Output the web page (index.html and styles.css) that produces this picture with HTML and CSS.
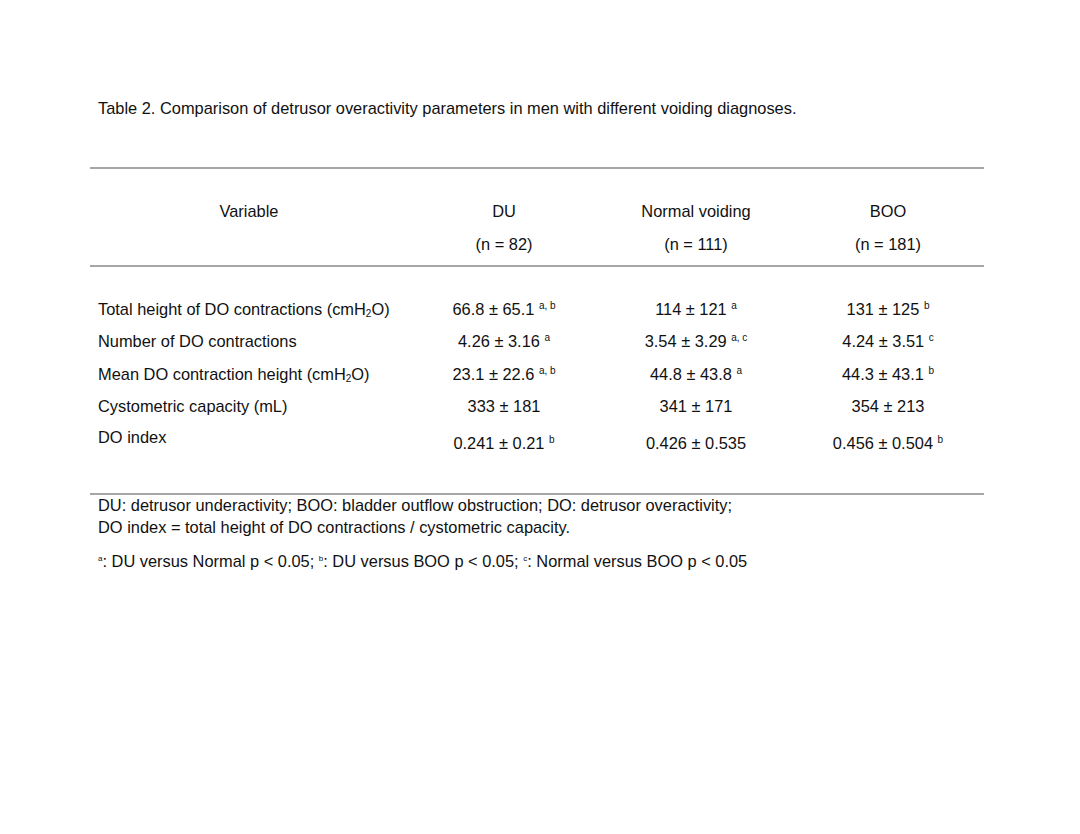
FILE: index.html
```html
<!DOCTYPE html>
<html>
<head>
<meta charset="utf-8">
<link rel="stylesheet" href="styles.css">
</head>
<body>
<div class="page">
  <p class="caption">Table 2. Comparison of detrusor overactivity parameters in men with different voiding diagnoses.</p>
  <table class="data">
    <colgroup>
      <col class="c-var"><col class="c-grp"><col class="c-grp"><col class="c-grp">
    </colgroup>
    <thead>
      <tr class="h1">
        <th>Variable</th><th>DU</th><th>Normal voiding</th><th>BOO</th>
      </tr>
      <tr class="h2">
        <th></th><th>(n = 82)</th><th>(n = 111)</th><th>(n = 181)</th>
      </tr>
    </thead>
    <tbody>
      <tr class="r1">
        <td>Total height of DO contractions (cmH<sub>2</sub>O)</td>
        <td>66.8 ± 65.1 <sup>a, b</sup></td>
        <td>114 ± 121 <sup>a</sup></td>
        <td>131 ± 125 <sup>b</sup></td>
      </tr>
      <tr class="r2">
        <td>Number of DO contractions</td>
        <td>4.26 ± 3.16 <sup>a</sup></td>
        <td>3.54 ± 3.29 <sup>a, c</sup></td>
        <td>4.24 ± 3.51 <sup>c</sup></td>
      </tr>
      <tr class="r3">
        <td>Mean DO contraction height (cmH<sub>2</sub>O)</td>
        <td>23.1 ± 22.6 <sup>a, b</sup></td>
        <td>44.8 ± 43.8 <sup>a</sup></td>
        <td>44.3 ± 43.1 <sup>b</sup></td>
      </tr>
      <tr class="r4">
        <td>Cystometric capacity (mL)</td>
        <td>333 ± 181</td>
        <td>341 ± 171</td>
        <td>354 ± 213</td>
      </tr>
      <tr class="r5">
        <td>DO index</td>
        <td>0.241 ± 0.21 <sup>b</sup></td>
        <td>0.426 ± 0.535</td>
        <td>0.456 ± 0.504 <sup>b</sup></td>
      </tr>
    </tbody>
  </table>
  <div class="notes">
    <p class="abbr">DU: detrusor underactivity; BOO: bladder outflow obstruction; DO: detrusor overactivity;<br>DO index = total height of DO contractions / cystometric capacity.</p>
    <p class="sig"><sup>a</sup>: DU versus Normal p &lt; 0.05; <sup>b</sup>: DU versus BOO p &lt; 0.05; <sup>c</sup>: Normal versus BOO p &lt; 0.05</p>
  </div>
</div>
</body>
</html>
```
FILE: styles.css
```css
html, body {
  margin: 0;
  padding: 0;
  background: #fff;
}
body {
  font-family: "Liberation Sans", Arial, sans-serif;
  font-size: 16.4px;
  color: #111;
}
.page {
  padding: 98px 0 0 90px;
  width: 895px;
}
.caption {
  margin: 0 0 0 8px;
  line-height: 20px;
}
.data {
  margin-top: 49px;
  width: 894px;
  border-collapse: collapse;
  table-layout: fixed;
  border-top: 2px solid #a6a6a6;
  border-bottom: 2px solid #a6a6a6;
}
.c-var { width: 318px; }
.c-grp { width: 192px; }
.data th {
  font-weight: normal;
  text-align: center;
  line-height: 20px;
  padding: 0;
}
.h1 th { padding-top: 31px; padding-bottom: 3px; }
.h1 th:first-child { padding-top: 32px; }
.h2 th { padding-top: 10px; padding-bottom: 11px; border-bottom: 2px solid #a6a6a6; }
.data td {
  line-height: 20px;
  text-align: center;
  vertical-align: top;
  padding: 6px 0 6px 0;
  white-space: nowrap;
}
.data td:first-child {
  text-align: left;
  padding-left: 8px;
}
.r1 td { padding-top: 32px; }
.r2 td { padding-top: 6px; }
.r3 td { padding-top: 7px; }
.r4 td { padding-top: 6px; }
.r5 td { padding-top: 11px; padding-bottom: 40px; }
.r5 td:first-child { padding-top: 5px; padding-bottom: 46px; }
sup {
  font-size: 10px;
  line-height: 0;
  vertical-align: 6px;
}
sub {
  font-size: 10px;
  line-height: 0;
  vertical-align: -2px;
}
.notes {
  padding-left: 8px;
}
.abbr {
  margin: -1px 0 0 0;
  line-height: 22px;
}
.sig {
  margin: 13px 0 0 0;
  line-height: 20px;
}
.sig sup {
  font-size: 8px;
  vertical-align: 6px;
}
```
